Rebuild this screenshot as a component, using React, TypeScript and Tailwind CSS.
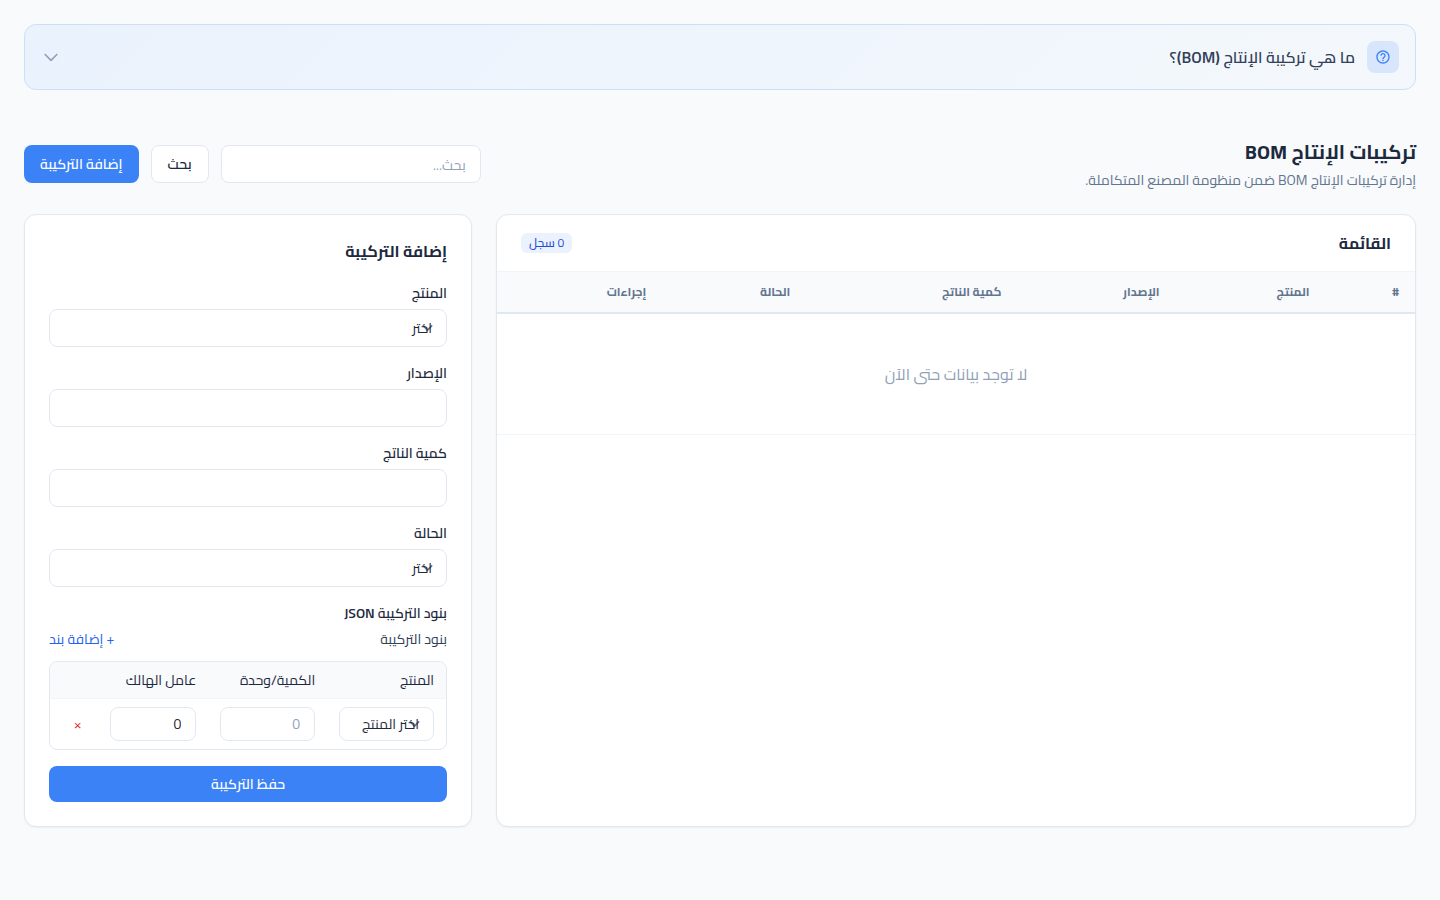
import type { ComponentProps, ReactNode } from "react";
import { MdHelpOutline } from "react-icons/md";

const fieldBase =
  "w-full rounded-lg border border-slate-200 text-sm leading-5 text-slate-800 placeholder:text-slate-400 outline-none focus:border-blue-500";

function SelectBox({ id, label, compact, children }: { id: string; label?: string; compact?: boolean; children: ReactNode }) {
  return (
    <div className="relative isolate rounded-lg bg-white">
      <svg
        className="pointer-events-none absolute top-1/2 right-[9px] -z-10 size-[21px] -translate-y-1/2"
        viewBox="0 0 20 20"
        fill="none"
        stroke="#6b7280"
        strokeWidth="1.5"
        strokeLinecap="round"
        strokeLinejoin="round"
        aria-hidden="true"
      >
        <path d="M6 8l4 4 4-4" />
      </svg>
      <select
        id={id}
        aria-label={label}
        className={`${fieldBase} appearance-none bg-transparent ${compact ? "h-[34px] pr-3.5 pl-2" : "h-[38px] px-3.5"}`}
      >
        {children}
      </select>
    </div>
  );
}

function Field({ id, label, children }: { id: string; label: string; children: ReactNode }) {
  return (
    <div>
      <label htmlFor={id} className="mb-1.5 block text-sm leading-5 font-semibold text-slate-800">
        {label}
      </label>
      {children}
    </div>
  );
}

function TextBox(props: ComponentProps<"input">) {
  return <input type="text" {...props} className={`${fieldBase} h-[38px] bg-white px-3.5`} />;
}

function HelpPanel() {
  return (
    <button
      type="button"
      className="flex w-full items-center justify-between rounded-xl border border-[#cbdffc] bg-linear-135 from-[#eaf2fd] to-[#f4f8fc] p-4"
    >
      <span className="flex items-center gap-3">
        <span className="flex size-8 items-center justify-center rounded-lg bg-[#d8e6fc] text-[#3b82f6]">
          <MdHelpOutline className="size-4" aria-hidden="true" />
        </span>
        <span className="text-base leading-6 font-semibold text-slate-700">ما هي تركيبة الإنتاج (BOM)؟</span>
      </span>
      <svg className="size-5 text-slate-400" viewBox="0 0 24 24" fill="none" stroke="currentColor" strokeWidth="2" strokeLinecap="round" strokeLinejoin="round" aria-hidden="true">
        <path d="M19 9l-7 7-7-7" />
      </svg>
    </button>
  );
}

function PageHeader() {
  return (
    <header className="mt-12 flex items-center justify-between gap-6">
      <div>
        <h1 className="text-xl leading-7 font-bold text-slate-800">تركيبات الإنتاج BOM</h1>
        <p className="mt-1 text-sm leading-5 text-slate-500">إدارة تركيبات الإنتاج BOM ضمن منظومة المصنع المتكاملة.</p>
      </div>
      <form className="flex items-center gap-3" onSubmit={(e) => e.preventDefault()}>
        <div className="w-[260px]">
          <TextBox aria-label="بحث" placeholder="بحث..." />
        </div>
        <button type="submit" className="h-[38px] rounded-lg border border-slate-200 bg-white px-4 text-sm font-semibold whitespace-nowrap text-slate-800">
          بحث
        </button>
        <button type="button" className="h-[38px] rounded-lg bg-[#3b82f6] px-4 text-sm font-semibold whitespace-nowrap text-white">
          إضافة التركيبة
        </button>
      </form>
    </header>
  );
}

function ListCard() {
  return (
    <section className="col-span-2 overflow-hidden rounded-xl border border-slate-200 bg-white shadow-xs">
      <div className="flex h-14 items-center justify-between px-6">
        <h2 className="text-base leading-6 font-bold text-slate-800">القائمة</h2>
        <span className="rounded-md bg-[#ebf2fe] px-2 text-xs leading-5 font-medium text-[#1d4ed8]">0 سجل</span>
      </div>
      <table className="w-full text-start">
        <thead>
          <tr className="h-[41px] border-t border-b-2 border-t-slate-100 border-b-slate-200 bg-slate-50 text-xs leading-4 text-slate-500">
            {["#", "المنتج", "الإصدار", "كمية الناتج", "الحالة", "إجراءات"].map((name) => (
              <th key={name} scope="col" className="px-4 text-start font-bold">
                {name}
              </th>
            ))}
          </tr>
        </thead>
        <tbody>
          <tr className="border-b border-slate-100">
            <td colSpan={6} className="px-4 py-12 text-center text-base leading-6 text-slate-400">
              لا توجد بيانات حتى الآن
            </td>
          </tr>
        </tbody>
      </table>
    </section>
  );
}

function ItemsTable() {
  return (
    <div className="overflow-hidden rounded-lg border border-slate-200">
      <table className="w-full table-fixed text-sm leading-5 text-slate-800">
        <colgroup>
          <col className="w-[30%]" />
          <col className="w-[30%]" />
          <col className="w-[28%]" />
          <col />
        </colgroup>
        <thead>
          <tr className="h-9 border-b border-slate-100 bg-slate-50">
            <th scope="col" className="px-3 text-start font-normal">المنتج</th>
            <th scope="col" className="px-3 text-start font-normal">الكمية/وحدة</th>
            <th scope="col" className="px-3 text-start font-normal">عامل الهالك</th>
            <td />
          </tr>
        </thead>
        <tbody>
          <tr>
            <td className="px-3 py-2">
              <SelectBox id="item-product" label="المنتج" compact>
                <option>اختر المنتج</option>
              </SelectBox>
            </td>
            <td className="px-3 py-2">
              <input aria-label="الكمية/وحدة" placeholder="0" className={`${fieldBase} block h-[34px] bg-white px-3.5`} />
            </td>
            <td className="px-3 py-2">
              <input aria-label="عامل الهالك" defaultValue="0" className={`${fieldBase} block h-[34px] bg-white px-3.5`} />
            </td>
            <td className="px-3 py-2">
              <button type="button" aria-label="×" className="px-1 text-sm text-[#dc2626]">×</button>
            </td>
          </tr>
        </tbody>
      </table>
    </div>
  );
}

function FormCard() {
  return (
    <section className="rounded-xl border border-slate-200 bg-white p-6 shadow-xs">
      <h2 className="mb-5 text-base leading-6 font-bold text-slate-800">إضافة التركيبة</h2>
      <form className="flex flex-col gap-4" onSubmit={(e) => e.preventDefault()}>
        <Field id="product" label="المنتج">
          <SelectBox id="product">
            <option>اختر</option>
          </SelectBox>
        </Field>
        <Field id="version" label="الإصدار">
          <TextBox id="version" />
        </Field>
        <Field id="output" label="كمية الناتج">
          <TextBox id="output" />
        </Field>
        <Field id="status" label="الحالة">
          <SelectBox id="status">
            <option>اختر</option>
          </SelectBox>
        </Field>
        <fieldset>
          <legend className="mb-1.5 text-sm leading-5 font-semibold text-slate-800">بنود التركيبة JSON</legend>
          <div className="mb-3 flex items-center justify-between text-sm leading-5">
            <span className="text-slate-700">بنود التركيبة</span>
            <button type="button" className="text-[#2563eb]">+ إضافة بند</button>
          </div>
          <ItemsTable />
        </fieldset>
        <button type="submit" className="h-9 w-full rounded-lg bg-[#3b82f6] text-sm font-semibold text-white">
          حفظ التركيبة
        </button>
      </form>
    </section>
  );
}

export default function App() {
  return (
    <div dir="rtl" lang="ar" className="min-h-screen bg-slate-50 p-6 font-['Titillium_Web',Cairo,'Noto_Sans',sans-serif]">
      <HelpPanel />
      <PageHeader />
      <main className="mt-6 grid grid-cols-3 gap-6">
        <ListCard />
        <FormCard />
      </main>
    </div>
  );
}
